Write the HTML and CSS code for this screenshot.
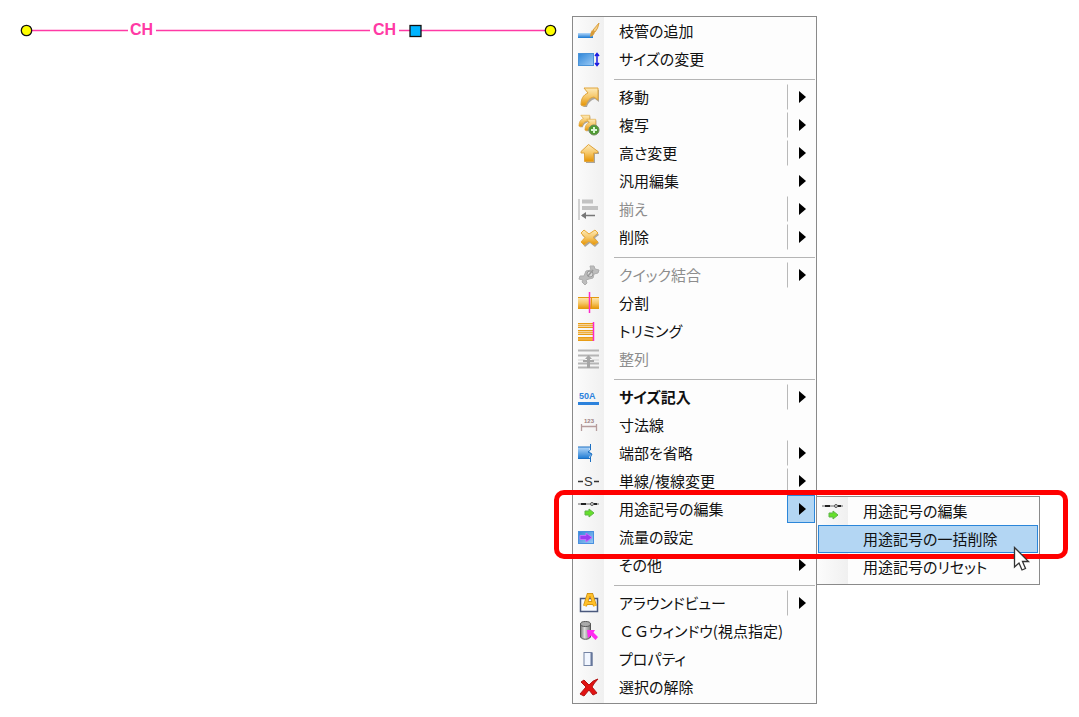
FILE: index.html
```
<!DOCTYPE html>
<html lang="ja">
<head>
    <meta charset="UTF-8">
    <meta name="viewport" content="width=device-width, initial-scale=1.0">
    <title>用途記号の編集</title>
    <link rel="stylesheet" href="styles.css">
</head>
<body>
    <svg class="defs" width="0" height="0" aria-hidden="true">
        <defs>
            <linearGradient id="gold" x1="0" y1="0" x2="0" y2="1"><stop offset="0" stop-color="#fdeab8"/><stop offset="0.5" stop-color="#f6c768"/><stop offset="1" stop-color="#e59300"/></linearGradient>
            <linearGradient id="blue" x1="0" y1="0" x2="1" y2="1"><stop offset="0" stop-color="#2f86d8"/><stop offset="1" stop-color="#9ccbf6"/></linearGradient>
            <linearGradient id="sky" x1="0" y1="0" x2="0" y2="1"><stop offset="0" stop-color="#b5d8fa"/><stop offset="1" stop-color="#1777d2"/></linearGradient>
            <linearGradient id="steel"><stop offset="0" stop-color="#777"/><stop offset="0.4" stop-color="#ddd"/><stop offset="1" stop-color="#777"/></linearGradient>
        </defs>
        <symbol id="arrow" viewBox="0 0 22 22">
            <path d="M5 21 9 21C10 17 13 14 17 13L21 16V4L19 3Z" fill="#aaa59c"/>
            <path d="M3 19C3 13 5 9 10 7L6 2H20V14L16 11C11 12 9 15 8 19L5 20Z" fill="url(#gold)" stroke="#e0a43b"/>
        </symbol>
        <symbol id="mark-edit" viewBox="0 0 22 22">
            <path d="M0 6H21" stroke="#666"/>
            <path d="M3 6H8M16 6H19" stroke="#222" stroke-width="2"/>
            <circle cx="14" cy="6" r="1.5" fill="#ddd" stroke="#555"/>
            <path d="M7 13H11V11L16 15 11 19V17H7Z" fill="#65e02a" stroke="#5fb548"/>
        </symbol>
    </svg>

    <main class="canvas">
        <svg class="pipe" width="572" height="60" role="img" aria-label="CH">
            <path d="M27 30.5H128M156 30.5H370M399 30.5H551" stroke="#ff3aa5" stroke-width="1.5"/>
            <text x="130" y="35">CH</text>
            <text x="373" y="35">CH</text>
            <circle cx="26.5" cy="30.5" r="5.2" fill="#ff0" stroke="#111" stroke-width="1.3"/>
            <rect x="410" y="25.5" width="11" height="11" fill="#00b4ff" stroke="#111" stroke-width="1.3"/>
            <circle cx="550.5" cy="30.5" r="5.2" fill="#ff0" stroke="#111" stroke-width="1.3"/>
        </svg>

        <nav class="menu main-menu" aria-label="編集">
            <button class="item"><svg class="icon" viewBox="0 0 22 22"><path d="M0 13H15V18H0Z" fill="url(#sky)"/><path d="M21 3 15 10 17 12Q20 9 21 3Z" fill="#f7cf84" stroke="#dba243"/><path d="M14 10 17 12Q16 16 12 17Q12 13 14 10Z" fill="#d99b36"/></svg><span class="label">枝管の追加</span></button>
            <button class="item"><svg class="icon" viewBox="0 0 22 22"><rect x="0.5" y="5.5" width="15" height="12" fill="url(#blue)" stroke="#4a93d8"/><path d="M19 6V17M17 8 19 5.5 21 8M17 15 19 17.5 21 15" fill="none" stroke="#1b1be0" stroke-width="1.5"/></svg><span class="label">サイズの変更</span></button>
            <hr>
            <button class="item"><svg class="icon"><use href="#arrow"/></svg><span class="label">移動</span><span class="more split"></span></button>
            <button class="item"><svg class="icon" viewBox="0 0 22 22"><use href="#arrow" x="-1" y="0" width="14" height="14"/><use href="#arrow" x="5" y="4" width="14" height="14"/><circle cx="16" cy="16" r="5" fill="#4e9b32" stroke="#6e8b5c"/><path d="M16 13V19M13 16H19" stroke="#d9f5d5" stroke-width="2"/></svg><span class="label">複写</span><span class="more split"></span></button>
            <button class="item"><svg class="icon" viewBox="0 0 22 22"><path d="M8 13V21H17V12H21V10L12 4Z" fill="#aaa59c"/><path d="M10.500 2.5 20 9.500 19 11H15.500V19.500H6.500V11H3V9.500Z" fill="url(#gold)" stroke="#e0a43b"/></svg><span class="label">高さ変更</span><span class="more split"></span></button>
            <button class="item"><svg class="icon"></svg><span class="label">汎用編集</span><span class="more"></span></button>
            <button class="item" disabled><svg class="icon" viewBox="0 0 22 22"><path d="M1 1V22" stroke="#aaa"/><path d="M4 3.5H15M4 10H20" stroke="#c2c2c2" stroke-width="4"/><path d="M4 17.5H17" stroke="#777" stroke-width="1.5"/><path d="M3 17.5 8 14V21Z" fill="#777"/></svg><span class="label">揃え</span><span class="more split"></span></button>
            <button class="item"><svg class="icon" viewBox="0 0 22 22"><path d="M5 6 12 9 18 5 21 9 17 12 21 17 17 21 12 17 7 21 4 17 8 13 4 9Z" fill="#aaa59c"/><path d="M6 4 11 8 17 4 20 7 15 11.500 20 16 16 19 11 15 6 19 3 16 7 11.500 3 7Z" fill="url(#gold)" stroke="#e9a834"/></svg><span class="label">削除</span><span class="more split"></span></button>
            <hr>
            <button class="item" disabled><svg class="icon" viewBox="0 0 22 22"><path d="M12 2 16 2 17 5 21 6 20 9 16 10 15 14 11 15 8 16 9 19 7 21 4 18 5 16 1 15 2 12 6 12 8 7 13 6Z" fill="#bdbdbd" stroke="#adadad"/><circle cx="12" cy="10" r="3" fill="#d9d9d9" stroke="#999"/><path d="M10 12 15 6" stroke="#999" stroke-width="1.5"/></svg><span class="label">クイック結合</span><span class="more split"></span></button>
            <button class="item"><svg class="icon" viewBox="0 0 22 22"><rect y="5" width="21" height="12" fill="url(#gold)"/><path d="M0 5.5H21M0 16.5H21M13.5 6V16" stroke="#e39a10"/><path d="M11.5 0V21" stroke="#ff25c8" stroke-width="1.5"/></svg><span class="label">分割</span></button>
            <button class="item"><svg class="icon" viewBox="0 0 22 22"><path d="M0 3.5H15M0 7.5H15M0 10.5H15M0 14.5H15M0 17.5H15M0 20.5H15" stroke="#e89c14"/><path d="M0 5.5H15M0 12.5H15M0 19H15" stroke="#f0b040" stroke-width="2"/><path d="M15.5 2V21" stroke="#ff25c8" stroke-width="1.5"/></svg><span class="label">トリミング</span></button>
            <button class="item" disabled><svg class="icon" viewBox="0 0 22 22"><path d="M0 2.500H21M0 7.500H21M0 15.500H21M0 19.500H21" stroke="#b5b5b5" stroke-width="2"/><path d="M0 12H7M14 12H21" stroke="#cfcfcf"/><path d="M10.5 7 14 11H12V12H16V14H12V20H9V14H5V12H9V11H7Z" fill="#a6a6a6"/></svg><span class="label">整列</span></button>
            <hr>
            <button class="item"><svg class="icon" viewBox="0 0 22 22"><text class="size-text" x="1" y="13">50A</text><path d="M0 17.500H21" stroke="#2c82dc" stroke-width="3"/></svg><span class="label strong">サイズ記入</span><span class="more split"></span></button>
            <button class="item"><svg class="icon" viewBox="0 0 22 22"><text class="dim-text" x="6" y="9">123</text><path d="M3.5 10V17M18.5 10V17M3 12.5H19" stroke="#b69c9c" stroke-width="1.3"/></svg><span class="label">寸法線</span></button>
            <button class="item"><svg class="icon" viewBox="0 0 22 22"><path d="M0 5H12L11 9 14 12 11 15 12 17H0Z" fill="url(#sky)"/><path d="M12.5 2V8L10 10 14 12 12.5 15V20M0 5H12M0 16.5H12" fill="none" stroke="#1b6fc2"/></svg><span class="label">端部を省略</span><span class="more split"></span></button>
            <button class="item"><svg class="icon" viewBox="0 0 22 22"><path d="M0 11.5H5M16 11.5H21" stroke="#333" stroke-width="1.5"/><text class="s-text" x="6" y="16">S</text></svg><span class="label">単線/複線変更</span><span class="more split"></span></button>
            <div class="parent">
                <button class="item" aria-expanded="true"><svg class="icon"><use href="#mark-edit"/></svg><span class="label">用途記号の編集</span><span class="more open"></span></button>
                <div class="menu submenu">
                    <button class="item"><svg class="icon"><use href="#mark-edit"/></svg><span class="label">用途記号の編集</span></button>
                    <button class="item selected"><svg class="icon"></svg><span class="label">用途記号の一括削除</span></button>
                    <button class="item"><svg class="icon"></svg><span class="label">用途記号のリセット</span></button>
                </div>
            </div>
            <button class="item"><svg class="icon" viewBox="0 0 22 22"><rect x="0.5" y="5.5" width="15" height="12" fill="url(#blue)" stroke="#4a90e0"/><path d="M2 9.500H8V7L14 11.5 8 16V13.500H2Z" fill="#9a3cf0" stroke="#c46dfb"/></svg><span class="label">流量の設定</span></button>
            <button class="item"><svg class="icon"></svg><span class="label">その他</span><span class="more"></span></button>
            <hr>
            <button class="item"><svg class="icon" viewBox="0 0 22 22"><rect x="2.5" y="6.5" width="17" height="13" fill="#f5f9ff" stroke="#49587c" stroke-width="1.5"/><path d="M7 14 10.500 3H13.500L17 14M9 11H15" fill="none" stroke="#c98a10" stroke-width="4"/><path d="M7 14 10.500 3H13.500L17 14M9 11H15" fill="none" stroke="#ffc02a" stroke-width="2.500"/></svg><span class="label">アラウンドビュー</span><span class="more split"></span></button>
            <button class="item"><svg class="icon" viewBox="0 0 22 22"><path d="M2.5 4V17C4 20 11 20 12.5 17V4" fill="url(#steel)" stroke="#555"/><ellipse cx="7.500" cy="4" rx="5" ry="2.500" fill="#aaa" stroke="#555"/><path d="M9 10H17L15.500 12.500 20 17 17.500 20 13 15.500 10 18Z" fill="#ff2af0"/></svg><span class="label wide">ＣＧ<span class="kana">ウィンドウ(視点指定)</span></span></button>
            <button class="item"><svg class="icon" viewBox="0 0 22 22"><rect x="6" y="4.500" width="8" height="13" fill="#f1f6ff" stroke="#7483a3"/><path d="M13.5 5V18" stroke="#66779b" stroke-width="2"/></svg><span class="label">プロパティ</span></button>
            <button class="item"><svg class="icon" viewBox="0 0 22 22"><path d="M3 6 6 4 11 9Q15 4 20 3Q16 7 14 11L19 17 15 19 11 14 6 20 2 18 8 11Z" fill="#e21313" stroke="#b01414"/></svg><span class="label">選択の解除</span></button>
        </nav>

        <div class="callout"></div>
        <svg class="cursor" viewBox="0 0 18 26" aria-hidden="true"><path d="M1.5 1.5V21L6 17 9 24 12.5 22.5 9.5 15.5H15.5Z" fill="#fff" stroke="#333" stroke-width="1.3"/></svg>
    </main>
</body>
</html>
```

FILE: styles.css
```
body { margin: 0; background: #fff; font-family: "Noto Sans CJK JP", sans-serif; }
.defs { position: absolute; }
.canvas { position: relative; min-height: 100vh; }

/* pipe on the drawing canvas */
.pipe { display: block; }
.pipe text { font: bold 16px "Liberation Sans", sans-serif; fill: #ff3aa5; }

/* menus */
.menu {
    position: absolute;
    box-sizing: border-box;
    border: 1px solid #8a8a8a;
    background: linear-gradient(to right, #fcfcfc, #f0f0f0 31px, #fdfdfd 31px);
}
.main-menu { left: 572px; top: 16px; width: 245px; padding-bottom: 2px; }
.menu hr { height: 1px; margin: 6px 1px 3px 41px; border: 0; background: #b5b5b5; }
.parent { position: relative; }
.submenu { left: 243px; top: 1px; width: 224px; padding-bottom: 3px; }

.item {
    display: flex;
    align-items: center;
    box-sizing: border-box;
    width: 100%;
    height: 28px;
    padding: 0 1px 0 5px;
    border: 0;
    background: none;
    color: #111;
    font-family: inherit;
    font-size: 15px;
    line-height: 28px;
    text-align: left;
}
.item:disabled { color: #8d8d8d; }
.icon { flex: none; width: 22px; height: 22px; }
.label { flex: 1; margin-left: 19px; white-space: nowrap; font-feature-settings: "palt"; }
.strong { font-weight: bold; }
.wide { font-feature-settings: normal; }
.kana { font-feature-settings: "palt"; }

.more {
    display: flex;
    align-items: center;
    box-sizing: border-box;
    width: 28px;
    height: 26px;
    padding-left: 11px;
    border: 1px solid transparent;
}
.more::before {
    content: "";
    border-left: 7px solid #000;
    border-top: 6px solid transparent;
    border-bottom: 6px solid transparent;
}
.split { border-left-color: #b9b9b9; }
.open { height: 28px; border-color: #2b86d9; background: #b3d6f3; }
.selected {
    width: calc(100% - 2px);
    margin: 0 1px;
    padding-left: 3px;
    border: 1px solid #2b86d9;
    background: #b3d6f3;
}

.size-text { font: bold 9px "Liberation Sans", sans-serif; fill: #2c82dc; }
.dim-text { font: bold 6px "Liberation Sans", sans-serif; fill: #9c7f7f; }
.s-text { font: 13px "Liberation Sans", sans-serif; fill: #333; }

/* marker round the two highlighted commands */
.callout {
    position: absolute;
    left: 554px;
    top: 490px;
    box-sizing: border-box;
    width: 514px;
    height: 69px;
    border: 5px solid #f00;
    border-radius: 10px;
    pointer-events: none;
}
.cursor { position: absolute; left: 1013px; top: 546px; width: 18px; height: 26px; }
```
